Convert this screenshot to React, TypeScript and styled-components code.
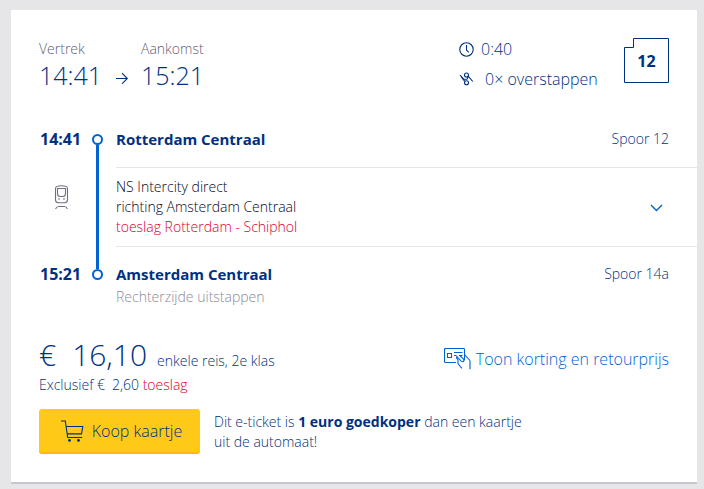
import React from "react";
import styled, { createGlobalStyle } from "styled-components";

const navy = "#003082";
const blue = "#0063d3";
const red = "#db0029";

const GlobalStyle = createGlobalStyle`
  * { box-sizing: border-box; }
  body {
    margin: 0;
    padding: 10px 7px 5px 11px;
    background: #e6e6e9;
    color: ${navy};
    font: 300 14px/20px "Open Sans", "Noto Sans", sans-serif;
  }
  svg { display: block; flex: none; fill: none; stroke: currentColor; }
  h2, p { margin: 0; }
`;

const Card = styled.main`
  background: #fff;
  border-bottom: 2px solid #c6c6cf;
  padding: 28px 0;
`;

const Header = styled.header`
  display: flex;
  align-items: flex-start;
  padding: 0 28px;
`;

const Times = styled.div`
  display: flex;
  flex: 1;
  align-items: flex-end;
`;

const TimeBlock = styled.div`
  width: 76px;
  color: #5f5f74;
  padding-top: 1px;
`;

const BigTime = styled.time`
  display: block;
  color: ${navy};
  font-size: 25px;
  line-height: 32px;
`;

const ArrowBox = styled.span`
  width: 26px;
  padding-bottom: 7px;
`;

const Facts = styled.div`
  display: grid;
  gap: 8px;
  width: 165px;
  font-size: 16px;
`;

const Fact = styled.div<{ $gap: number }>`
  display: flex;
  align-items: center;
  gap: ${(p) => p.$gap}px;
  height: 22px;
`;

const Platform = styled.div`
  display: grid;
  place-items: center;
  width: 45px;
  height: 45px;
  font-weight: 700;
  font-size: 16px;

  > * { grid-area: 1 / 1; }
`;

const Journey = styled.section`
  display: grid;
  grid-template-columns: 53px 11px 1fr;
  padding: 36px 0 0 28px;
`;

const StopTime = styled.time<{ $row: number }>`
  grid-area: ${(p) => p.$row} / 1;
  padding-left: 1px;
  font-weight: 700;
  font-size: 16px;
  line-height: 24px;
`;

const Rail = styled.div`
  grid-area: 1 / 2 / 4 / 3;
  display: flex;
  flex-direction: column;
  align-items: center;
  padding: 7px 0 6px;
`;

const Dot = styled.span`
  width: 11px;
  height: 11px;
  border: 2px solid ${blue};
  border-radius: 50%;
`;

const Line = styled.span`
  flex: 1;
  width: 3px;
  background: ${blue};
`;

const Stop = styled.div<{ $row: number }>`
  grid-area: ${(p) => p.$row} / 3;
  display: flex;
  justify-content: space-between;
  margin-left: 13px;
  padding-right: 28px;
  line-height: 24px;
`;

const Station = styled.h2`
  font-size: 15px;
  line-height: 24px;
  font-weight: 700;
`;

const Vehicle = styled.div`
  grid-area: 2 / 1;
  display: flex;
  align-items: center;
  padding: 0 0 18px 15px;
  color: #6f6f82;
`;

const Leg = styled.div`
  grid-area: 2 / 3;
  display: flex;
  align-items: center;
  justify-content: space-between;
  margin: 16px 0 15px 13px;
  padding: 9px 34px 9px 0;
  border: solid #e6e6e9;
  border-width: 1px 0;
  color: #070721;
`;

const Surcharge = styled.span`
  color: ${red};
`;

const ToggleButton = styled.button`
  padding: 2px 0 0;
  border: 0;
  background: none;
  color: ${blue};
  cursor: pointer;
`;

const ExitSide = styled.p`
  grid-area: 4 / 3;
  margin: 1px 0 0 13px;
  color: #8b8b99;
`;

const Pricing = styled.section`
  display: flex;
  align-items: center;
  justify-content: space-between;
  padding: 28px 28px 0;
`;

const Price = styled.p`
  display: flex;
  align-items: baseline;
  gap: 10px;
`;

const Amount = styled.span`
  display: flex;
  gap: 16px;
  font-size: 30px;
  line-height: 40px;
`;

const SmallAmount = styled.span`
  display: inline-flex;
  gap: 7px;
`;

const DiscountLink = styled.a`
  display: flex;
  align-items: center;
  gap: 5px;
  padding-top: 8px;
  color: ${blue};
  font-size: 16px;
  text-decoration: none;
`;

const Extra = styled.p`
  padding: 0 28px;
`;

const Purchase = styled.section`
  display: flex;
  align-items: center;
  gap: 14px;
  padding: 14px 28px 0;
`;

const BuyButton = styled.button`
  display: flex;
  align-items: center;
  justify-content: center;
  gap: 8px;
  width: 161px;
  height: 45px;
  padding: 0 6px 0 10px;
  border: 0;
  border-bottom: 2px solid #ffb614;
  border-radius: 3px;
  background: #ffc917;
  color: ${navy};
  font: inherit;
  font-size: 16px;
  cursor: pointer;
`;

const Advice = styled.p`
  max-width: 320px;

  b { font-weight: 700; }
`;

const ArrowIcon = () => (
  <svg width="14" height="12" viewBox="0 0 14 12" strokeWidth="1.1">
    <path d="M1 6.5h11M7 1.2l5.3 5.3L7 11.8" />
  </svg>
);

const ClockIcon = () => (
  <svg width="15" height="15" viewBox="0 0 15 15" strokeWidth="1.1">
    <circle cx="7.5" cy="7.5" r="6.7" />
    <path d="M7.5 3v5l2.2 2.4" />
  </svg>
);

const TransferIcon = () => (
  <svg width="15" height="14" viewBox="0 0 15 14" strokeWidth="1.1">
    <circle cx="7.5" cy="3" r="2" />
    <circle cx="7.5" cy="10.7" r="2" />
    <path d="M1 3.2l3.6 3.6q.6.5 1.4.5h1.2q.8 0 1.1-.6L9.2 4.4M9.2 4.2l4.6 5.3M5.8 9.4L2.2 5" />
  </svg>
);

const PlatformIcon = () => (
  <svg width="45" height="45" viewBox="0 0 45 45">
    <path d="M9.5.5h35v44H.5v-35h9z" />
  </svg>
);

const TrainIcon = () => (
  <svg width="15" height="25" viewBox="0 0 15 25" strokeWidth="1.1">
    <path d="M3.5 1.3Q7.5.3 11.5 1.3q2 .4 2 2.4v11q0 3-3 3h-6q-3 0-3-3v-11q0-2 2-2.4z" />
    <path d="M3.5 3.5h8v5q0 3-2.5 3H6q-2.5 0-2.5-3z" />
    <path d="M4 14h2M9 14h2M4 21.5h7M3.5 21.5l-2 2.5M11.5 21.5l2 2.5" />
  </svg>
);

const ChevronIcon = () => (
  <svg width="13" height="8" viewBox="0 0 13 8" strokeWidth="1.4">
    <path d="M1 1l5.5 5.5L12 1" />
  </svg>
);

const CardIcon = () => (
  <svg width="27" height="22" viewBox="0 0 27 22" strokeWidth="1.1">
    <path d="M12 14.5H1.5q-1 0-1-1v-12q0-1 1-1h18q1 0 1 1v5l5 5.5q.5.6.5 1.5v7.8" />
    <path d="M3.5 5.5h4v4h-4zM10 4.5h8.5M10 7.5h2M15 7.5h3.5M12 7.5l5.2 5.6q1.5 1.3 2.4 0 .6-1-.3-2.3L15.8 7.5M20.5 6.5v6M12.5 7.8q-.7 2.2 1.5 4.2v3.5q2 3 4 4.8" />
  </svg>
);

const CartIcon = () => (
  <svg width="23" height="22" viewBox="0 0 23 22" strokeWidth="1.1">
    <path d="M0 1h4.3l2.4 16.5h14.5M5.2 6.5h16.6l-1.3 7.4H6.3" />
    <circle cx="8.5" cy="20.4" r="1.4" fill="currentColor" stroke="none" />
    <circle cx="17.5" cy="20.4" r="1.4" fill="currentColor" stroke="none" />
  </svg>
);

export default function App() {
  return (
    <>
      <GlobalStyle />
      <Card>
        <Header>
          <Times>
            <TimeBlock>
              Vertrek<BigTime>14:41</BigTime>
            </TimeBlock>
            <ArrowBox><ArrowIcon /></ArrowBox>
            <TimeBlock>
              Aankomst<BigTime>15:21</BigTime>
            </TimeBlock>
          </Times>
          <Facts>
            <Fact $gap={7}><ClockIcon />0:40</Fact>
            <Fact $gap={11}><TransferIcon />0× overstappen</Fact>
          </Facts>
          <Platform><PlatformIcon /><span>12</span></Platform>
        </Header>

        <Journey>
          <StopTime $row={1}>14:41</StopTime>
          <Rail><Dot /><Line /><Dot /></Rail>
          <Stop $row={1}><Station>Rotterdam Centraal</Station><span>Spoor 12</span></Stop>
          <Vehicle><TrainIcon /></Vehicle>
          <Leg>
            <p>
              NS Intercity direct<br />
              richting Amsterdam Centraal<br />
              <Surcharge>toeslag Rotterdam - Schiphol</Surcharge>
            </p>
            <ToggleButton aria-label="Toon tussenstops"><ChevronIcon /></ToggleButton>
          </Leg>
          <StopTime $row={3}>15:21</StopTime>
          <Stop $row={3}><Station>Amsterdam Centraal</Station><span>Spoor 14a</span></Stop>
          <ExitSide>Rechterzijde uitstappen</ExitSide>
        </Journey>

        <Pricing>
          <Price>
            <Amount><span>€</span><span>16,10</span></Amount>
            <span>enkele reis, 2e klas</span>
          </Price>
          <DiscountLink href="#korting"><CardIcon />Toon korting en retourprijs</DiscountLink>
        </Pricing>
        <Extra>
          Exclusief <SmallAmount><span>€</span><span>2,60</span></SmallAmount>{" "}
          <Surcharge>toeslag</Surcharge>
        </Extra>
        <Purchase>
          <BuyButton><CartIcon />Koop kaartje</BuyButton>
          <Advice>Dit e-ticket is <b>1 euro goedkoper</b> dan een kaartje uit de automaat!</Advice>
        </Purchase>
      </Card>
    </>
  );
}
